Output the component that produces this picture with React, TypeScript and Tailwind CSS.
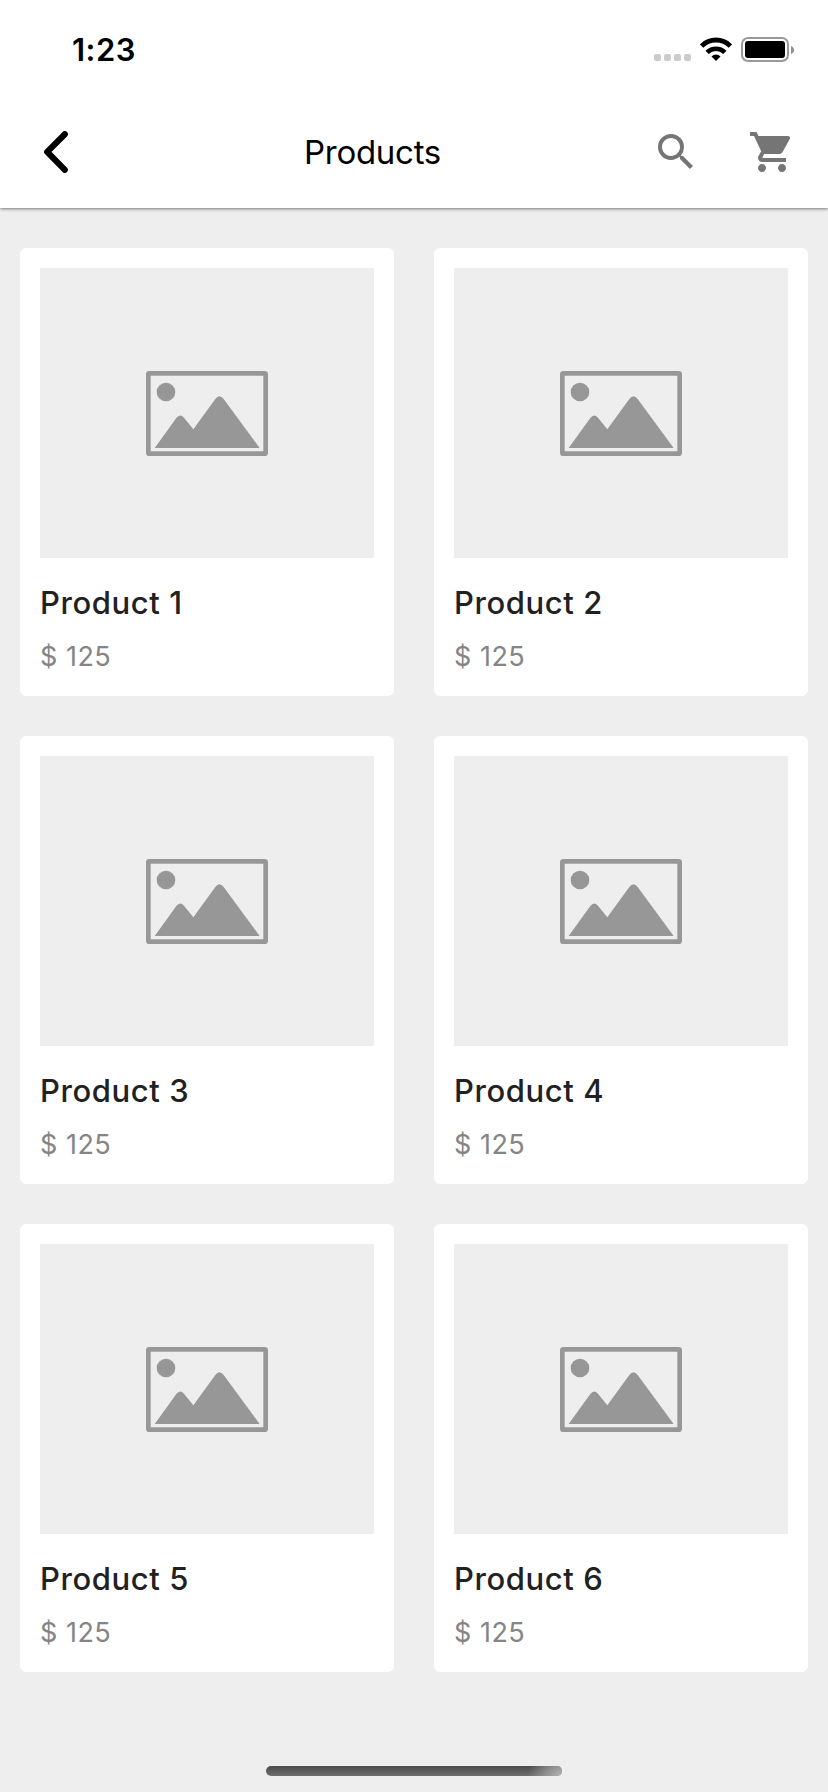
import { MdSearch, MdShoppingCart } from "react-icons/md";

const products = [
  { name: "Product 1", price: "$ 125" },
  { name: "Product 2", price: "$ 125" },
  { name: "Product 3", price: "$ 125" },
  { name: "Product 4", price: "$ 125" },
  { name: "Product 5", price: "$ 125" },
  { name: "Product 6", price: "$ 125" },
];

function WifiIcon() {
  return (
    <svg className="h-6 w-8" viewBox="0 0 32 24" fill="none" stroke="#000">
      <path d="M1.6 9 A20.3 20.3 0 0 1 30.4 9" strokeWidth="4.8" />
      <path d="M7.1 15.4 A12.6 12.6 0 0 1 24.9 15.4" strokeWidth="4.6" />
      <path d="M16 23.9 L11.5 19.4 A6.3 6.3 0 0 1 20.5 19.4 Z" fill="#000" stroke="none" />
    </svg>
  );
}

function BatteryIcon() {
  return (
    <div className="flex items-center gap-[2px]">
      <div className="flex h-[25px] w-[48px] rounded-[7px] border-2 border-[#999] p-[2px]">
        <div className="flex-1 rounded-[3px] bg-black" />
      </div>
      <svg className="h-2 w-[3px]" viewBox="0 0 3 8">
        <path d="M0 0 C4 1.4 4 6.6 0 8Z" fill="#8c8c8c" />
      </svg>
    </div>
  );
}

function StatusBar() {
  return (
    <div className="flex h-24 items-start pr-[34px] pl-[72px]">
      <span className="mt-[30px] text-[31px] leading-10 font-semibold tracking-[0.5px] text-black">1:23</span>
      <div className="mt-[37px] ml-auto flex">
        <div className="mt-[17px] flex gap-[3px]">
          <span className="size-[7px] rounded-[2px] bg-[#ccc]" />
          <span className="size-[7px] rounded-[2px] bg-[#ccc]" />
          <span className="size-[7px] rounded-[2px] bg-[#ccc]" />
          <span className="size-[7px] rounded-[2px] bg-[#ccc]" />
        </div>
        <div className="mx-[9px]">
          <WifiIcon />
        </div>
        <BatteryIcon />
      </div>
    </div>
  );
}

function NavBar() {
  return (
    <div className="flex h-28 items-center pr-8 pl-[43px]">
      <svg className="h-[42px] w-[26px]" viewBox="0 0 26 42" fill="none" stroke="#000" strokeWidth="6.2" strokeLinecap="round" strokeLinejoin="round">
        <path d="M21.8 3.2 L4.2 20.9 L21.8 38.8" />
      </svg>
      <h1 className="ml-[235px] text-[33px] leading-10 font-normal tracking-[-0.28px] text-black">Products</h1>
      <div className="ml-auto flex gap-12 text-[#757575]">
        <MdSearch className="size-12" />
        <MdShoppingCart className="size-12" />
      </div>
    </div>
  );
}

function PlaceholderImage() {
  return (
    <div className="flex h-[290px] items-center justify-center bg-[#eee]">
      <svg className="mt-px h-[85px] w-[122px]" viewBox="0 0 366 255" fill="#979797">
        <rect x="7" y="7" width="352" height="241" rx="3" fill="none" stroke="#979797" strokeWidth="14" />
        <circle cx="60" cy="63" r="28" />
        <path d="M26 231 L91 141 Q102 126 114 140 L142 175 L208 84 Q220 68 233 84 L341 231 Z" />
      </svg>
    </div>
  );
}

function ProductCard({ name, price }: { name: string; price: string }) {
  return (
    <article className="h-[448px] rounded-[6px] bg-white p-5">
      <PlaceholderImage />
      <h2 className="mt-[25px] text-[31px] leading-10 font-medium tracking-[0.58px] text-[#212121]">{name}</h2>
      <p className="mt-[14px] text-[27px] leading-10 tracking-[0.5px] text-[#858585]">{price}</p>
    </article>
  );
}

export default function App() {
  return (
    <div className="flex h-[1792px] w-[828px] flex-col overflow-hidden bg-[#eee] font-['Inter',sans-serif]">
      <header className="h-52 shrink-0 bg-white shadow-[0_1px_3px_rgba(0,0,0,0.5)]">
        <StatusBar />
        <NavBar />
      </header>
      <main className="mt-10 grid grid-cols-2 gap-10 px-5">
        {products.map((product) => (
          <ProductCard key={product.name} name={product.name} price={product.price} />
        ))}
      </main>
      <div className="mt-auto mb-4 ml-[266px] h-[10px] w-[296px] overflow-hidden rounded-full bg-linear-to-b from-[#4b4b4b] to-[#6f6f6f]">
        <div className="ml-auto h-full w-10 bg-[radial-gradient(circle_at_100%_100%,#b4b4b4,rgba(180,180,180,0)_34px)]" />
      </div>
    </div>
  );
}
